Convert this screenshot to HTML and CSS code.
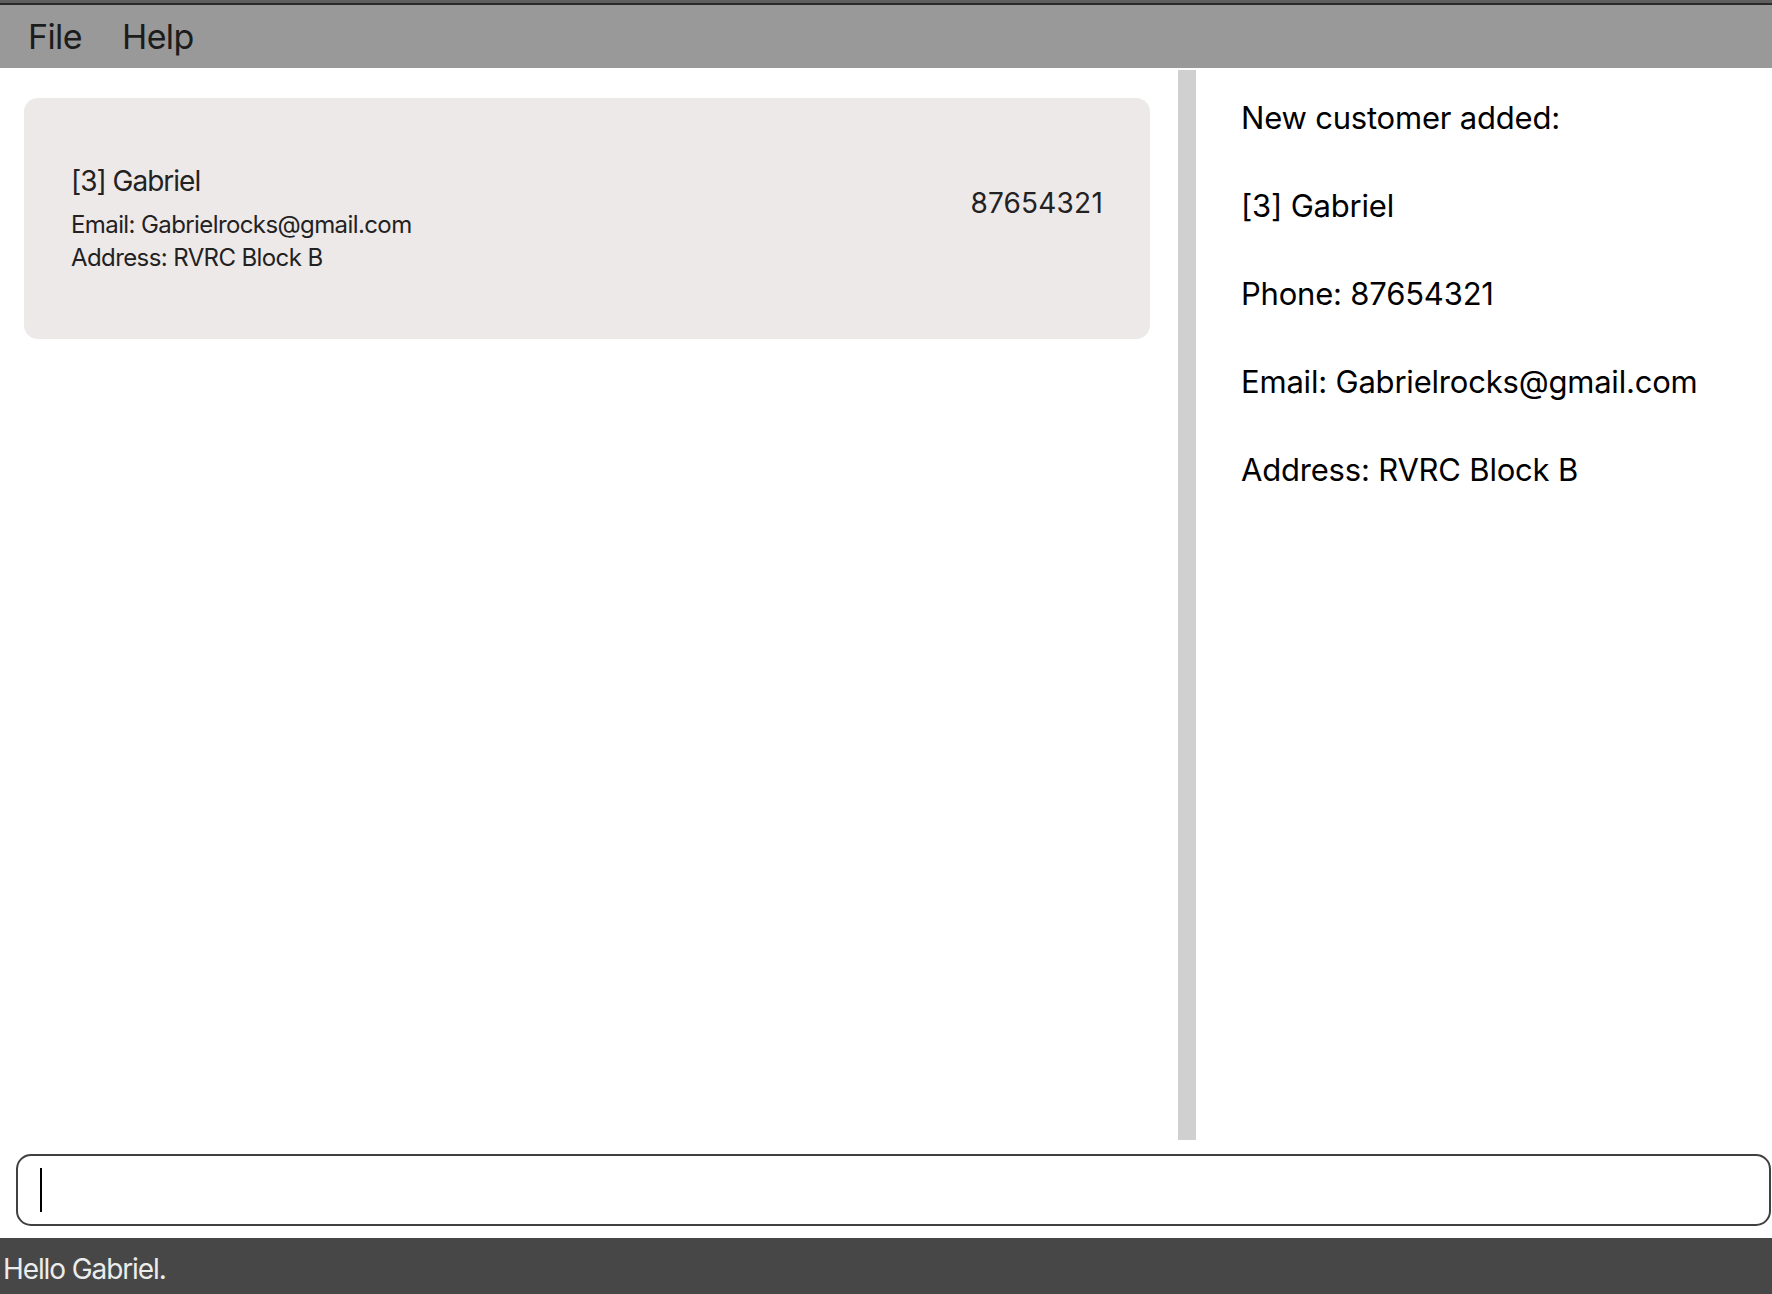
FILE: index.html
```html
<!DOCTYPE html>
<html lang="en">
<head>
<meta charset="utf-8">
<title>Address Book</title>
<link rel="stylesheet" href="styles.css">
</head>
<body>
<div class="app">
  <div class="titleline"></div>
  <nav class="menubar">
    <span class="menu-item">File</span>
    <span class="menu-item">Help</span>
  </nav>
  <main class="content">
    <section class="list">
      <div class="card">
        <div class="card-info">
          <div class="card-name">[3] Gabriel</div>
          <div class="card-line card-email">Email: Gabrielrocks@gmail.com</div>
          <div class="card-line">Address: RVRC Block B</div>
        </div>
        <div class="card-phone">87654321</div>
      </div>
    </section>
    <div class="splitter"></div>
    <section class="detail">
      <div class="result">New customer added:

[3] Gabriel

Phone: 87654321

Email: Gabrielrocks@gmail.com

Address: RVRC Block B</div>
    </section>
  </main>
  <div class="command">
    <div class="cmdbox"><span class="caret"></span></div>
  </div>
  <footer class="status">Hello Gabriel.</footer>
</div>
</body>
</html>
```
FILE: styles.css
```css
html, body {
  margin: 0;
  padding: 0;
}
body {
  width: 1772px;
  height: 1294px;
  overflow: hidden;
  background: #ffffff;
  font-family: Inter, "Noto Sans", sans-serif;
}
.app {
  display: flex;
  flex-direction: column;
  height: 1294px;
}
.titleline {
  height: 3px;
  background: #5f5f5f;
  border-bottom: 2px solid #2a2a2a;
  flex: none;
}
.menubar {
  flex: none;
  height: 63px;
  background: #999999;
  display: flex;
  align-items: center;
  padding-left: 28px;
  gap: 40px;
}
.menu-item {
  font-size: 34px;
  line-height: 63px;
  color: #1c1c1c;
  letter-spacing: -0.6px;
}
.content {
  flex: none;
  height: 1070px;
  padding-top: 2px;
  display: flex;
}
.list {
  width: 1178px;
  flex: none;
  padding-top: 28px;
  box-sizing: border-box;
}
.card {
  margin-left: 24px;
  width: 1126px;
  height: 241px;
  box-sizing: border-box;
  background: #eee9e9;
  border-radius: 14px;
  padding: 0 47px 0 47px;
  display: flex;
  align-items: center;
  justify-content: space-between;
  color: #222222;
}
.card-name {
  font-size: 28px;
  line-height: 34px;
  letter-spacing: -1px;
  margin-bottom: 10px;
}
.card-line {
  font-size: 24px;
  line-height: 33px;
  letter-spacing: -0.6px;
}
.card-phone {
  align-self: flex-start;
  margin-top: 88px;
  font-size: 28px;
  line-height: 34px;
  letter-spacing: 0.2px;
}
.splitter {
  width: 18px;
  flex: none;
  background: #d0d0d0;
}
.detail {
  flex: 1;
  padding: 16px 6px 17px 27px;
  display: flex;
}
.result {
  flex: 1;
  padding: 10px 18px;
  white-space: pre-wrap;
  font-size: 31px;
  line-height: 44px;
  letter-spacing: -0.2px;
  color: #000000;
}
.command {
  flex: none;
  height: 98px;
  padding: 14px 1px 12px 16px;
  box-sizing: border-box;
}
.cmdbox {
  height: 72px;
  box-sizing: border-box;
  border: 2px solid #404040;
  border-radius: 15px;
  padding: 12px 22px;
  display: flex;
  align-items: center;
}
.caret {
  width: 2px;
  height: 44px;
  background: #000000;
}
.status {
  flex: 1;
  background: #474747;
  color: #ececec;
  font-size: 28px;
  line-height: 56px;
  padding: 3px 0 0 3px;
  letter-spacing: -1.1px;
}
```
